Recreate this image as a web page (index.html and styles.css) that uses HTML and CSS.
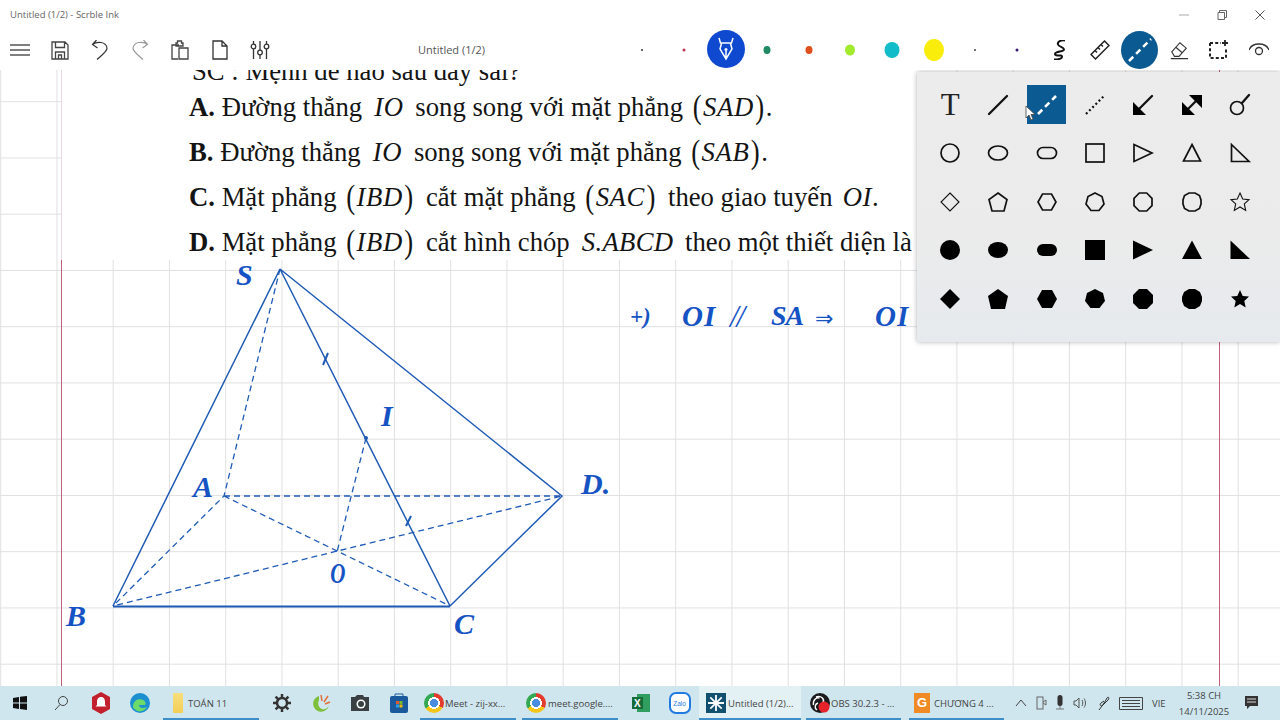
FILE: index.html
```html
<!DOCTYPE html>
<html lang="vi">
<head>
<meta charset="utf-8">
<title>Untitled (1/2) - Scrble Ink</title>
<link rel="stylesheet" href="styles.css">
</head>
<body>
<div class="app">
  <header class="titlebar">
    <span class="app-title">Untitled (1/2) - Scrble Ink</span>
    <div class="win-btns">
      <svg width="10" height="10" viewBox="0 0 10 10"><path d="M0 5h10" stroke="#aaa" fill="none"/></svg>
      <svg width="10" height="10" viewBox="0 0 10 10"><path d="M1 2.500h6.500v7h-6.500zM2.500 2.500v-2h7v7h-2" stroke="#666" fill="none"/></svg>
      <svg width="10" height="10" viewBox="0 0 10 10"><path d="M.5 .5l9 9M9.500 .5l-9 9" stroke="#555" fill="none"/></svg>
    </div>
  </header>
  <nav class="toolbar">
    <div class="tb-left">
      <svg class="ic" viewBox="0 0 20 20"><path d="M0 5h20M0 10h20M0 15h20" stroke="#555" stroke-width="1.600" fill="none"/></svg>
      <svg class="ic" viewBox="0 0 20 20"><path d="M2 2h13l3 3v14H2zM5.500 2v5.500h9V2M5.500 19v-7h9v7M8.500 15h3v4h-3z" stroke="#444" stroke-width="1.300" fill="none"/></svg>
      <svg class="ic" viewBox="0 0 20 20"><path d="M6.500 0L2.500 4.500l5 3.500M2.500 4.500C7 1 16 1.500 17 8c.4 3-5 7-10 11.500" stroke="#333" stroke-width="1.200" fill="none"/></svg>
      <svg class="ic" viewBox="0 0 20 20"><path d="M13.500 0l4 4.500-5 3.500M17.500 4.500C13 1 4 1.500 3 8c-.4 3 5 7 10 11.500" stroke="#999" stroke-width="1.200" fill="none"/></svg>
      <svg class="ic" viewBox="0 0 20 20"><path d="M9 5H2v14h6M6 3h1.500V1h4v2H13v3H6zM9 8h9v11H9z" stroke="#444" stroke-width="1.300" fill="none"/></svg>
      <svg class="ic" viewBox="0 0 20 20"><path d="M3 1h9l5 5v13H3zM12 1v5h5" stroke="#333" stroke-width="1.300" fill="none"/></svg>
      <svg class="ic" viewBox="0 0 20 20"><path d="M3.500 1v3M3.500 9v10M10 1v9M10 15v4M16.500 1v3M16.500 9v10" stroke="#333" stroke-width="1.300" fill="none"/><circle cx="3.500" cy="6.500" r="2.300" stroke="#333" stroke-width="1.300" fill="none"/><circle cx="10" cy="12.500" r="2.300" stroke="#333" stroke-width="1.300" fill="none"/><circle cx="16.500" cy="6.500" r="2.300" stroke="#333" stroke-width="1.300" fill="none"/></svg>
    </div>
    <span class="doc-title">Untitled (1/2)</span>
    <div class="tb-pens">
      <span class="dot d1"></span>
      <span class="dot d2"></span>
      <span class="pen-active"><svg width="16" height="24" viewBox="0 0 16 24"><path d="M1 1l1.500 5h11L15 1M3.500 6.500L2 12l6 10 6-10-1.500-5.500M8 22v-8" stroke="#fff" stroke-width="1.500" fill="none"/><circle cx="8" cy="12.500" r="1.500" fill="#fff"/></svg></span>
      <span class="dot d3"></span>
      <span class="dot d4"></span>
      <span class="dot d5"></span>
      <span class="dot d6"></span>
      <span class="dot d7"></span>
      <span class="dot d8"></span>
      <span class="dot d9"></span>
    </div>
    <div class="tb-right">
      <svg class="ic" viewBox="0 0 20 20"><path d="M15 .500C11-.5 7 2 8 4.500s6 2.500 6 5-9 1.500-9 4.500 7 0 7 2.500-4 3-8 3" stroke="#111" stroke-width="2" fill="none"/></svg>
      <svg class="ic" viewBox="0 0 20 20"><path d="M1 14.500L14.500 1 19 5.500 5.500 19zM5 10.500l2 2M8 7.500l2 2M11 4.500l2 2" stroke="#222" stroke-width="1.500" fill="none"/></svg>
      <span class="shape-active"><svg width="24" height="24" viewBox="0 0 24 24"><path d="M1 23L23 1" stroke="#fff" stroke-width="2.500" stroke-dasharray="6 4" fill="none"/></svg></span>
      <svg class="ic" viewBox="0 0 22 22"><path d="M3 13L12 3l7 6-8 9H6zM7.500 8l7 6M2 20.500h19" stroke="#333" stroke-width="1.200" fill="none"/></svg>
      <svg class="ic" viewBox="0 0 20 20"><path d="M1 3h11M1 3v15h16V8" stroke="#222" stroke-width="2" stroke-dasharray="3 2.200" fill="none"/><path d="M16 0v6M13 3h6" stroke="#222" stroke-width="1.800" fill="none"/></svg>
      <svg class="ic" viewBox="0 0 20 20"><path d="M0 10C3 2 17 2 20 10" stroke="#333" stroke-width="1.300" fill="none"/><circle cx="10" cy="11" r="3.500" stroke="#333" stroke-width="1.300" fill="none"/></svg>
    </div>
  </nav>

  <main class="canvas">
    <div class="grid"></div>
    <section class="question">
      <p class="q-line q-clip">SC : Mệnh đề nào sau đây sai?</p>
      <p class="q-line"><b>A.</b> Đường thẳng <i class="m">IO</i> song song với mặt phẳng <span class="p po">(</span><i>SAD</i><span class="p">)</span>.</p>
      <p class="q-line"><b>B.</b> Đường thẳng <i class="m">IO</i> song song với mặt phẳng <span class="p po">(</span><i>SAB</i><span class="p">)</span>.</p>
      <p class="q-line"><b>C.</b> Mặt phẳng <span class="p po">(</span><i>IBD</i><span class="p pc">)</span> cắt mặt phẳng <span class="p po">(</span><i>SAC</i><span class="p pc">)</span> theo giao tuyến <i class="m end">OI</i>.</p>
      <p class="q-line"><b>D.</b> Mặt phẳng <span class="p po">(</span><i>IBD</i><span class="p pc">)</span> cắt hình chóp <i class="m tight">S.ABCD</i> theo một thiết diện là</p>
    </section>
    <svg class="drawing" width="1280" height="615" viewBox="0 70 1280 615">
      <g stroke="#1f5bb5" fill="none" stroke-width="1.500">
        <path d="M280 269L113 606M450 606L562 496L280 269M280 269L450 606"/>
        <path d="M113 606.500H450" stroke-width="1.900"/>
        <path d="M323 365l5-12M406 526l5-10" stroke-width="2"/>
        <path d="M280 269L224 496L113 606M224 496H562L113 606M224 496L450 606M366 438L337 552" stroke-dasharray="6 4" stroke-width="1.300"/>
      </g>
      <circle cx="366" cy="438" r="2" fill="#1f5bb5"/>
    </svg>
    <span class="hw l-s">S</span>
    <span class="hw l-a">A</span>
    <span class="hw l-b">B</span>
    <span class="hw l-c">C</span>
    <span class="hw l-d">D.</span>
    <span class="hw l-i">I</span>
    <span class="hw l-o">O</span>
    <span class="hw n-plus">+)</span>
    <span class="hw n-oi">OI</span>
    <span class="hw n-par">//</span>
    <span class="hw n-sa">SA</span>
    <span class="hw n-arrow">⇒</span>
    <span class="hw n-oi2">OI</span>

    <div class="palette">
      <span class="s"><span class="t-glyph">T</span></span>
      <span class="s"><svg viewBox="0 0 24 24"><path d="M3 21L21 3" class="o t"/></svg></span>
      <span class="s sel"><svg viewBox="0 0 24 24"><path d="M3 21L21 3" class="w"/></svg></span>
      <span class="s"><svg viewBox="0 0 24 24"><path d="M3 21L21 3" class="o dd"/></svg></span>
      <span class="s"><svg viewBox="0 0 24 24"><path d="M21 3L8 16" class="o t"/><path d="M2 22V9l13 13z"/></svg></span>
      <span class="s"><svg viewBox="0 0 24 24"><path d="M8 16L16 8" class="o t"/><path d="M2 22V9l13 13zM22 2v13L9 2z"/></svg></span>
      <span class="s"><svg viewBox="0 0 24 24"><circle cx="9" cy="15" r="6.500" class="o"/><path d="M14 10L21 2" class="o t"/></svg></span>

      <span class="s"><svg viewBox="0 0 24 24"><circle cx="12" cy="12" r="9" class="o"/></svg></span>
      <span class="s"><svg viewBox="0 0 24 24"><ellipse cx="12" cy="12" rx="9.500" ry="7" class="o"/></svg></span>
      <span class="s"><svg viewBox="0 0 24 24"><rect x="2.500" y="6.500" width="19" height="11" rx="5.500" class="o"/></svg></span>
      <span class="s"><svg viewBox="0 0 24 24"><rect x="3" y="3" width="18" height="18" class="o"/></svg></span>
      <span class="s"><svg viewBox="0 0 24 24"><path d="M3 3.500L21 12 3 20.500z" class="o"/></svg></span>
      <span class="s"><svg viewBox="0 0 24 24"><path d="M12 3.500L20.500 20H3.500z" class="o"/></svg></span>
      <span class="s"><svg viewBox="0 0 24 24"><path d="M3.500 3.500L21 20.500H3.500z" class="o"/></svg></span>

      <span class="s"><svg viewBox="0 0 24 24"><path d="M12 3l9 9-9 9-9-9z" class="o thin"/></svg></span>
      <span class="s"><svg viewBox="0 0 24 24"><path d="M12 3l9 6.500-3 11.500H6L3 9.500z" class="o"/></svg></span>
      <span class="s"><svg viewBox="0 0 24 24"><path d="M7.500 4h9L21 12l-4.500 8h-9L3 12z" class="o"/></svg></span>
      <span class="s"><svg viewBox="0 0 24 24"><path d="M12 3l7 3.500 2 7.500-5 6.500H8L3 14l2-7.500z" class="o"/></svg></span>
      <span class="s"><svg viewBox="0 0 24 24"><path d="M8.300 3h7.400L21 8.300v7.400L15.700 21H8.300L3 15.700V8.300z" class="o"/></svg></span>
      <span class="s"><svg viewBox="0 0 24 24"><path d="M9 3h6l4.500 2.500L21 10v4l-1.500 4.500L15 21H9l-4.500-2.500L3 14v-4l1.500-4.500z" class="o"/></svg></span>
      <span class="s"><svg viewBox="0 0 24 24"><path d="M12 3l2.700 6 6.300.6-4.700 4.300 1.400 6.500L12 17l-5.700 3.400 1.400-6.500L3 9.600 9.300 9z" class="o thin"/></svg></span>

      <span class="s"><svg viewBox="0 0 24 24"><circle cx="12" cy="12" r="10"/></svg></span>
      <span class="s"><svg viewBox="0 0 24 24"><ellipse cx="12" cy="12" rx="10" ry="8"/></svg></span>
      <span class="s"><svg viewBox="0 0 24 24"><rect x="2" y="6" width="20" height="12" rx="6"/></svg></span>
      <span class="s"><svg viewBox="0 0 24 24"><rect x="2" y="2" width="20" height="20"/></svg></span>
      <span class="s"><svg viewBox="0 0 24 24"><path d="M2 2.500L22 12 2 21.500z"/></svg></span>
      <span class="s"><svg viewBox="0 0 24 24"><path d="M12 2.500L22 21H2z"/></svg></span>
      <span class="s"><svg viewBox="0 0 24 24"><path d="M2.500 2.500L22 21H2.500z"/></svg></span>

      <span class="s"><svg viewBox="0 0 24 24"><path d="M12 2l10 10-10 10L2 12z"/></svg></span>
      <span class="s"><svg viewBox="0 0 24 24"><path d="M12 2l10 7-3 13H5L2 9z"/></svg></span>
      <span class="s"><svg viewBox="0 0 24 24"><path d="M7 3h10l5 9-5 9H7l-5-9z"/></svg></span>
      <span class="s"><svg viewBox="0 0 24 24"><path d="M12 2l8 4 2 8-5.500 7h-9L2 14l2-8z"/></svg></span>
      <span class="s"><svg viewBox="0 0 24 24"><path d="M8 2h8l6 6v8l-6 6H8l-6-6V8z"/></svg></span>
      <span class="s"><svg viewBox="0 0 24 24"><path d="M9 2h6l5 3 2 5v4l-2 5-5 3H9l-5-3-2-5v-4l2-5z"/></svg></span>
      <span class="s"><svg viewBox="0 0 24 24"><path d="M12 3l2.700 6 6.300.6-4.700 4.300 1.400 6.500L12 17l-5.700 3.400 1.400-6.500L3 9.600 9.300 9z"/></svg></span>
    </div>
    <svg class="cursor" width="10" height="16" viewBox="0 0 10 16"><path d="M1 1v12l3-3 2 5 2-1-2-4.500h4z" fill="#fff" stroke="#444" stroke-width=".8"/></svg>
  </main>

  <footer class="taskbar">
    <div class="tk start"><svg width="14" height="14" viewBox="0 0 14 14"><path d="M0 2l6-1v5.500H0zM7 .8L14 0v6.500H7zM0 7.500h6V13l-6-1zM7 7.500h7V14l-7-1z" fill="#111"/></svg></div>
    <div class="tk search"><svg width="16" height="16" viewBox="0 0 16 16"><circle cx="10" cy="6" r="4.500" stroke="#444" fill="none"/><path d="M7 9.500L2 15" stroke="#444" fill="none"/></svg></div>
    <div class="tk i-bit"><svg width="20" height="22" viewBox="0 0 20 22"><path d="M10 0l9 5v12l-9 5-9-5V5z" fill="#c1202c"/><path d="M10 5c3 0 4 2.500 4 5v3l1.500 1.500h-11L6 13v-3c0-2.500 1-5 4-5z" fill="#fff"/></svg></div>
    <div class="tk i-edge"><svg width="22" height="22" viewBox="0 0 22 22"><circle cx="11" cy="11" r="10" fill="#1b8fd0"/><path d="M4 15c0-7 6-9 10-7 3 1.500 3 4 2 5h-6c0 3 4 4 8 2-2 4-8 6-11 3-2-1-3-2-3-3z" fill="#6ddb6a"/></svg></div>
    <div class="tk app-btn a-folder open"><span class="folder"></span><span class="tk-label">TOÁN 11</span></div>
    <div class="tk i-gear"><svg width="18" height="18" viewBox="0 0 18 18"><circle cx="9" cy="9" r="5" stroke="#333" stroke-width="2.500" fill="none"/><path d="M9 0v4M9 14v4M0 9h4M14 9h4M2.600 2.600l3 3M12.400 12.400l3 3M15.400 2.600l-3 3M5.600 12.400l-3 3" stroke="#333" stroke-width="2.500"/></svg></div>
    <div class="tk i-coc"><svg width="20" height="20" viewBox="0 0 20 20"><path d="M8 3a8 8 0 1 0 10 9c-1 3-4 5-7 4-3-1-5-5-3-9z" fill="#7ebf3c"/><path d="M11 8l-1-6M13 9l4-6M14 11l5-2" stroke="#e2703a" stroke-width="1.500"/></svg></div>
    <div class="tk i-cam"><svg width="20" height="18" viewBox="0 0 20 18"><path d="M1 3h4l2-2h6l1 2h5v14H1z" fill="#3a3f42"/><circle cx="11" cy="10" r="4.500" fill="#fff"/><circle cx="11" cy="10" r="3" fill="#3a3f42"/></svg></div>
    <div class="tk i-store"><svg width="20" height="20" viewBox="0 0 20 20"><rect x="1" y="3" width="18" height="17" rx="2" fill="#1a5a9c"/><path d="M6 4V1h8v3" stroke="#1a5a9c" fill="none"/><rect x="7" y="8" width="3" height="3" fill="#e5562e"/><rect x="10.500" y="8" width="3" height="3" fill="#7ab92a"/><rect x="7" y="11.500" width="3" height="3" fill="#2aa0e5"/><rect x="10.500" y="11.500" width="3" height="3" fill="#f1b90c"/></svg></div>
    <div class="tk app-btn a-chrome open"><span class="chrome"></span><span class="tk-label">Meet - zij-xx...</span></div>
    <div class="tk app-btn a-chrome2 open"><span class="chrome"></span><span class="tk-label">meet.google....</span></div>
    <div class="tk i-excel"><svg width="20" height="20" viewBox="0 0 20 20"><rect x="6" y="1" width="13" height="18" fill="#2f9e5f"/><rect x="1" y="4" width="11" height="12" fill="#166b3a"/><text x="3" y="14" class="x-txt">X</text></svg></div>
    <div class="tk i-zalo"><span class="zalo">Zalo</span></div>
    <div class="tk app-btn a-scrble open active"><span class="scrble"><svg width="18" height="18" viewBox="0 0 18 18"><path d="M9 1v16M1 9h16M3.300 3.300l11.400 11.400M14.700 3.300L3.300 14.700" stroke="#fff" stroke-width="1.800"/></svg></span><span class="tk-label">Untitled (1/2)...</span></div>
    <div class="tk app-btn a-obs open"><svg class="obs" width="20" height="20" viewBox="0 0 20 20"><circle cx="10" cy="10" r="10" fill="#1b1b1e"/><path d="M6 4c5-2 9 2 7 6M3.500 12c-1-5 3-8 6-7M7 17c-3-2-2-6 1-7" stroke="#fff" stroke-width="1.400" fill="none"/><circle cx="14" cy="14" r="5.500" fill="#e6222a"/></svg><span class="tk-label">OBS 30.2.3 - ...</span></div>
    <div class="tk app-btn a-pdf open"><span class="pdf">G</span><span class="tk-label">CHƯƠNG 4 ...</span></div>
    <div class="tray">
      <svg width="12" height="8" viewBox="0 0 12 8"><path d="M1 7l5-6 5 6" stroke="#444" fill="none"/></svg>
      <svg width="11" height="14" viewBox="0 0 11 14"><rect x="1" y="1" width="6" height="12" stroke="#666" fill="none"/><path d="M7 6l3-2v5l-3-2" stroke="#666" fill="none"/></svg>
      <svg width="8" height="17" viewBox="0 0 8 17"><rect x="1.500" y="0" width="5" height="11" rx="2.500" fill="#333"/><path d="M0 14h8M4 11v3" stroke="#777"/></svg>
      <svg width="15" height="12" viewBox="0 0 15 12"><path d="M1 4h2l3-3v10L3 8H1zM9 3c1 2 1 4 0 6M11 1.500c2 3 2 6 0 9" stroke="#555" fill="none"/></svg>
      <svg width="13" height="15" viewBox="0 0 13 15"><path d="M2 14c3-4 6-8 8-12 1-2 3 0 1 2L6 9c-2 2-4 0-2-2l3-2" stroke="#333" fill="none"/></svg>
      <svg width="24" height="13" viewBox="0 0 24 13"><path d="M.5 .5h23v12H.5zM3 3.500h18M3 6.500h18M3 9.500h18" stroke="#444" fill="none"/></svg>
      <span class="lang">VIE</span>
      <div class="clock"><span>5:38 CH</span><span>14/11/2025</span></div>
      <svg class="notif" width="16" height="16" viewBox="0 0 16 16"><path d="M1 1h13v10H6l-3 3v-3H1z" fill="#333"/><path d="M3 4h9M3 7h9" stroke="#ddd"/></svg>
    </div>
  </footer>
</div>
</body>
</html>
```
FILE: styles.css
```css
* { box-sizing: border-box; }
html, body { margin: 0; height: 100%; }
body { width: 1280px; height: 720px; overflow: hidden; font-family: "Open Sans", "Noto Sans", sans-serif; background: #fff; }
.app { display: flex; flex-direction: column; height: 720px; }

.titlebar { height: 30px; flex: none; display: flex; align-items: center; justify-content: space-between; padding-left: 10px; background: #fff; }
.app-title { font-size: 9.500px; color: #666; line-height: 1; }
.win-btns { display: flex; gap: 28px; padding-right: 15px; align-items: center; }

.toolbar { height: 40px; flex: none; display: flex; align-items: center; background: #fff; position: relative; z-index: 5; }
.ic { width: 20px; height: 20px; flex: none; }
.tb-left { display: flex; gap: 20px; padding-left: 10px; width: 378px; }
.doc-title { width: 250px; font-size: 11px; line-height: 1; color: #555; padding-left: 40px; margin-bottom: 2px; }
.tb-pens { display: flex; align-items: center; width: 410px; position: relative; height: 40px; }
.dot { position: absolute; border-radius: 50%; top: 50%; transform: translate(-50%, -50%); }
.d1 { left: 14px; width: 2px; height: 2px; background: #333; }
.d2 { left: 56px; width: 3px; height: 3px; background: #c0304a; }
.d3 { left: 139px; width: 7px; height: 8px; background: #1f8a63; }
.d4 { left: 181px; width: 7px; height: 8px; background: #df4f1c; }
.d5 { left: 222px; width: 10px; height: 11px; background: #a2ea2c; }
.d6 { left: 264px; width: 15px; height: 16px; background: #12bcc9; }
.d7 { left: 306px; width: 20px; height: 22px; background: #f9ee0b; }
.d8 { left: 347px; width: 2px; height: 2px; background: #444; }
.d9 { left: 389px; width: 3px; height: 3px; background: #3a1a70; }
.pen-active { position: absolute; left: 79px; top: 0; width: 38px; height: 38px; border-radius: 50%; background: #0f49d0; display: flex; align-items: center; justify-content: center; }
.tb-right { flex: 1; display: flex; align-items: center; gap: 20px; margin-left: 12px; }
.shape-active { width: 37px; height: 38px; margin: 0 -9px; border-radius: 50%; background: #0c5a92; display: flex; align-items: center; justify-content: center; flex: none; }

.canvas { flex: 1; position: relative; overflow: hidden; background: #fff; }
.grid { position: absolute; inset: 0;
  background-color: #fff;
  background-image:
    linear-gradient(to right, #e0e0e2 1px, transparent 1px),
    linear-gradient(to bottom, #e0e0e2 1px, transparent 1px);
  background-size: 56.250px 56.250px;
  background-position: 0.200px 31.200px; }
.grid::before { content: ""; position: absolute; left: 61px; top: 0; bottom: 0; width: 1px; background: linear-gradient(#e6d8e4 0 190px, #c2607c 190px); }
.grid::after { content: ""; position: absolute; left: 1219px; top: 0; bottom: 0; width: 1px; background: #c2607c; }

.question { position: absolute; left: 62px; top: 0; width: 858px; height: 190px; background: #fff; overflow: hidden; padding-left: 127px; padding-top: 21.500px; }
.q-line { margin: 0 0 14px; height: 31px; line-height: 31px; font-family: "Liberation Serif", serif; font-size: 26.700px; color: #141414; white-space: pre; }
.q-line i { letter-spacing: .6px; }
.q-line.q-clip { position: absolute; top: -10px; left: 130px; height: 22px; line-height: 22px; margin: 0; }
.q-line i.m { margin: 0 5px 0 5.500px; }
.q-line i.end { margin: 0 0 0 3.500px; }
.q-line i.tight { letter-spacing: .3px; }
.p { display: inline-block; line-height: 1; transform: scaleY(1.3); transform-origin: 50% 62%; margin: 0 1.500px; }
.po { margin-left: 3px; }
.pc { margin-right: 6px; }

.drawing { position: absolute; left: 0; top: 0; }
.hw { position: absolute; font-family: "Liberation Serif", serif; font-style: italic; font-weight: 700; color: #1553c4; line-height: 1; font-size: 30px; white-space: pre; }
.l-s { left: 236px; top: 190px; }
.l-a { left: 193px; top: 402px; }
.l-b { left: 66px; top: 531px; }
.l-c { left: 454px; top: 539px; }
.l-d { left: 581px; top: 399px; }
.l-i { left: 381px; top: 331px; }
.l-o { left: 327px; top: 488px; transform: scaleX(.7); }
.n-plus { left: 630px; top: 235px; font-size: 23px; }
.n-oi { left: 682px; top: 232px; font-size: 29px; letter-spacing: 1px; }
.n-par { left: 730px; top: 231px; font-size: 31px; font-weight: 400; letter-spacing: -2px; }
.n-sa { left: 771px; top: 232px; font-size: 28px; letter-spacing: -1px; }
.n-arrow { left: 815px; top: 238px; font-family: "DejaVu Sans", sans-serif; font-style: normal; font-size: 22px; font-weight: 400; }
.n-oi2 { left: 875px; top: 232px; font-size: 29px; letter-spacing: 1px; }

.palette { position: absolute; left: 917px; top: 2px; width: 363px; height: 270px; padding: 8.500px 9px 0 9px; background: linear-gradient(180deg, #ececec 0%, #ebebeb 60%, #e6eaee 100%); box-shadow: 0 0 5px rgba(0,0,0,.3); display: grid; grid-template-columns: repeat(7, 48.300px); grid-auto-rows: 48.500px; align-content: start; z-index: 6; }
.s { display: flex; align-items: center; justify-content: center; width: 39px; height: 39px; margin: 0 auto; align-self: center; }
.s svg { width: 24px; height: 24px; fill: #000; }
.s .o { fill: none; stroke: #111; stroke-width: 1.700; }
.s .o.thin { stroke-width: 1.100; }
.s .t { stroke-linecap: round; stroke-width: 2.300; }
.s .dd { stroke-width: 2.200; stroke-dasharray: 2 2.500; }
.s .w { fill: none; stroke: #fff; stroke-width: 2.600; stroke-dasharray: 6 4; }
.sel { background: #0c5a92; }
.t-glyph { font-family: "Liberation Serif", serif; font-size: 31px; line-height: 1; color: #222; }
.cursor { position: absolute; left: 1025px; top: 35px; z-index: 7; }

.taskbar { height: 34px; flex: none; display: flex; align-items: center; background: #cfe6ee; position: relative; z-index: 8; }
.tk { height: 34px; display: flex; align-items: center; justify-content: center; flex: none; position: relative; }
.start { width: 40px; }
.search { width: 41px; }
.i-bit { width: 40px; }
.i-edge { width: 37px; }
.app-btn { justify-content: flex-start; }
.open::after { content: ""; position: absolute; left: 0; right: 0; bottom: 0; height: 2px; background: #3d8ec9; }
.active { background: #e3f0f4; }
.tk-label { font-size: 9.500px; color: #444; white-space: nowrap; }
.a-folder { width: 96px; margin-left: 5px; padding-left: 10px; gap: 5px; }
.folder { width: 10px; height: 20px; background: linear-gradient(#f6df7e, #f4cd55); border-radius: 1px; }
.i-gear { width: 38px; margin-left: 4px; }
.i-coc { width: 39px; }
.i-cam { width: 39px; }
.i-store { width: 39px; }
.a-chrome { width: 96px; margin-left: 2px; padding-left: 4px; gap: 1px; }
.a-chrome2 { width: 96px; margin-left: 6px; padding-left: 4px; gap: 2px; }
.chrome { width: 20px; height: 20px; border-radius: 50%; flex: none; background: radial-gradient(circle, #4a8de0 0 4px, #fff 4px 6px, transparent 6px), conic-gradient(#e33b2e 0 33%, #f5c518 33% 66%, #34a853 66%); }
.i-excel { width: 38px; margin-left: 4px; }
.x-txt { font-family: "Liberation Sans", sans-serif; font-size: 10px; font-weight: 700; fill: #fff; }
.i-zalo { width: 39px; }
.zalo { width: 22px; height: 22px; border-radius: 7px; border: 2px solid #1f7be0; background: #fff; font-family: "Liberation Sans", sans-serif; font-size: 6.500px; color: #1f7be0; display: flex; align-items: center; justify-content: center; }
.a-scrble { width: 102px; padding-left: 7px; gap: 2px; }
.scrble { width: 20px; height: 20px; background: #11506f; display: flex; align-items: center; justify-content: center; flex: none; }
.a-obs { width: 95px; margin-left: 5px; padding-left: 4px; gap: 1px; }
.obs { flex: none; }
.a-pdf { width: 95px; margin-left: 8px; padding-left: 5px; gap: 4px; }
.pdf { width: 16px; height: 20px; background: #f08a24; color: #fff; font-family: "Liberation Sans", sans-serif; font-size: 13px; font-weight: 700; text-align: center; line-height: 20px; flex: none; }
.tray { flex: 1; display: flex; align-items: center; gap: 9px; padding-left: 11px; }
.lang { font-size: 9.500px; color: #444; width: 17px; }
.clock { display: flex; flex-direction: column; align-items: center; width: 52px; flex: none; font-size: 9.500px; color: #444; line-height: 16px; margin-top: 2px; }
.notif { margin-left: 5px; flex: none; }
```
